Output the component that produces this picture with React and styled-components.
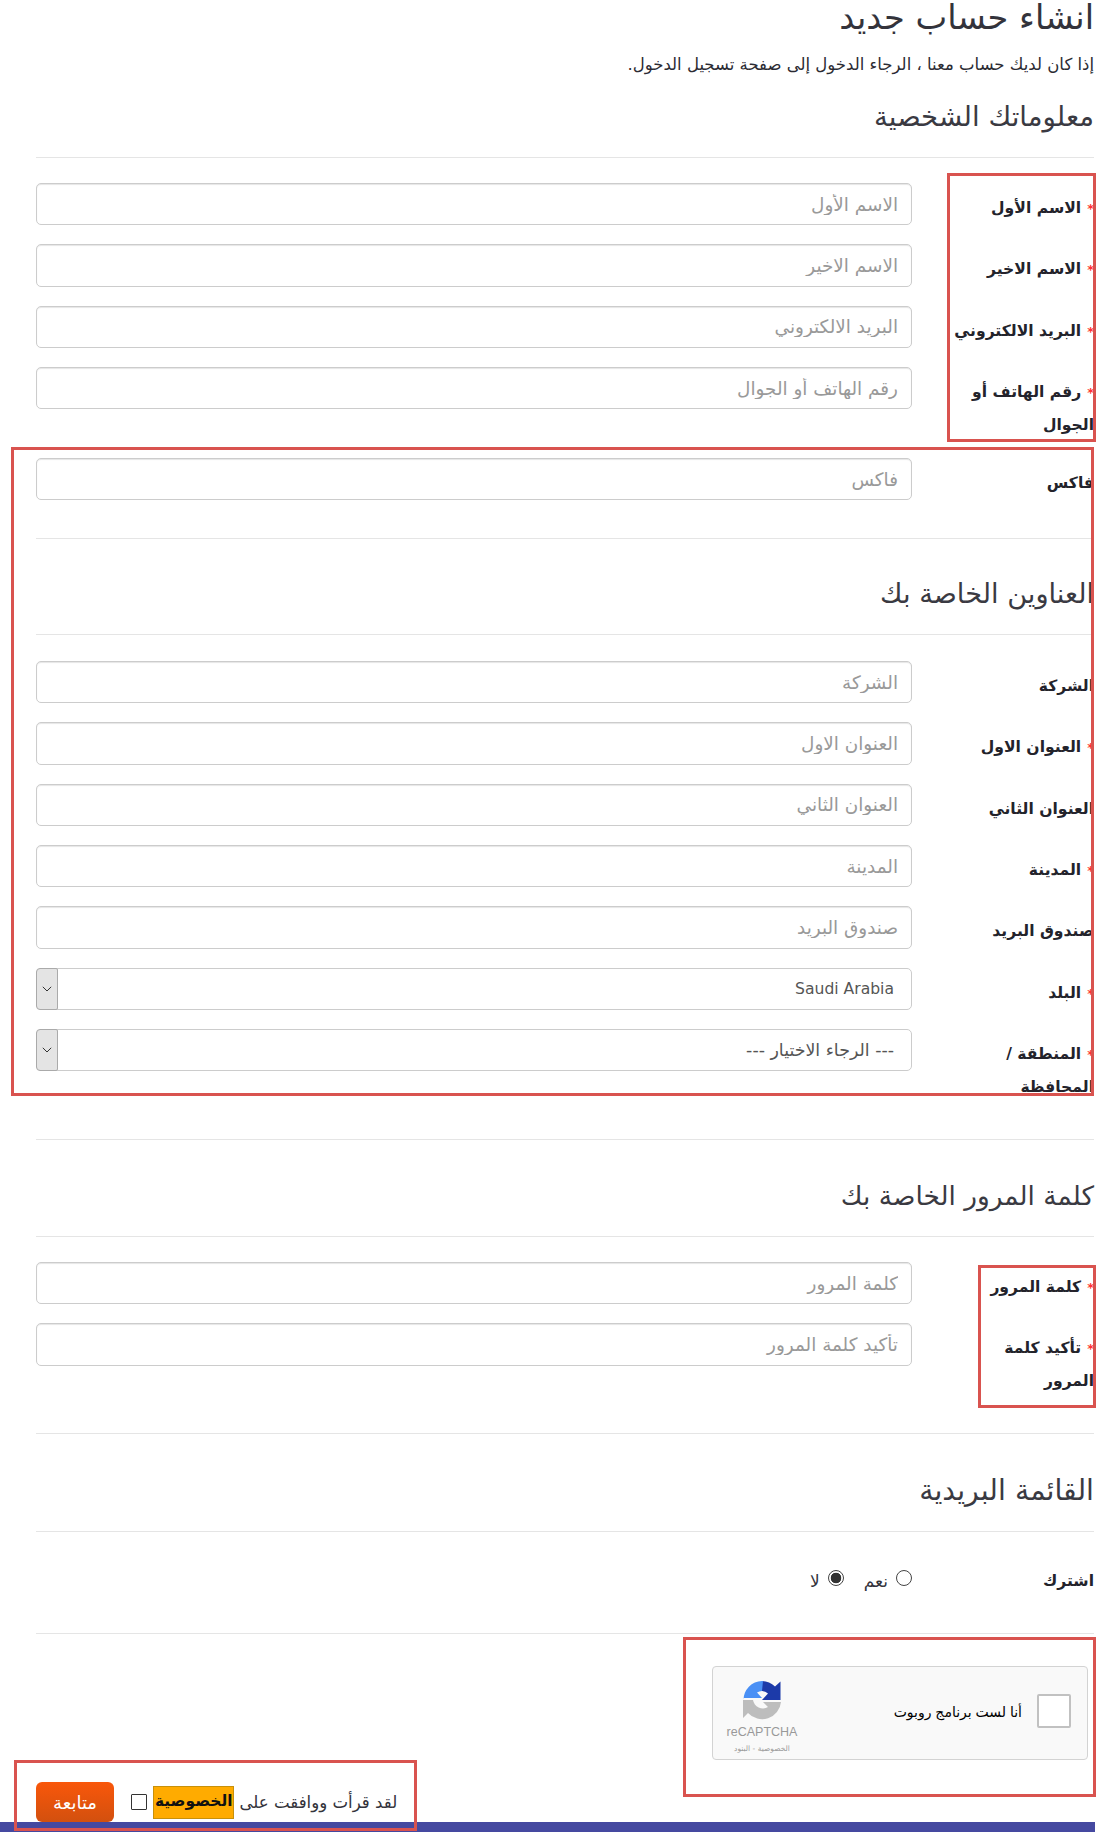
import React from "react";
import styled, { createGlobalStyle } from "styled-components";

const Global = createGlobalStyle`
  html, body { margin: 0; padding: 0; background: #fff; }
  body { font-family: "DejaVu Sans", sans-serif; color: #2b2b33; overflow-x: hidden; }
  * { box-sizing: border-box; }
`;

const Page = styled.div`
  position: relative;
  width: 1096px;
  height: 1832px;
  overflow: hidden;
  background: #fff;
`;
const Main = styled.form`
  padding: 0 2px 0 36px;
  height: 1822px;
`;
const Title = styled.h1`
  margin: 0;
  font-size: 33.7px;
  font-weight: 400;
  line-height: 35px;
  height: 36px;
  color: #33333b;
`;
const Intro = styled.p`
  margin: 15px 0 -1px;
  font-size: 16.5px;
  line-height: 28px;
  color: #2b2b33;
`;
const Legend = styled.h2`
  margin: ${(p) => p.$top}px 0 ${(p) => p.$after}px;
  padding-bottom: 20px;
  font-size: ${(p) => p.$size}px;
  font-weight: 400;
  line-height: 40px;
  color: #3a3a42;
  border-bottom: 1px solid #e5e5e5;
`;
const Row = styled.div`
  display: grid;
  grid-template-columns: 182px 876px;
  margin-bottom: 19px;
  min-height: 42.3px;
`;
const Label = styled.label`
  display: block;
  margin-bottom: -3px;
  padding: 9px 0 0 39px;
  font-size: 15.6px;
  font-weight: 700;
  line-height: 33px;
  color: #23232b;
`;
const Star = styled.span`
  color: #f33;
  font-size: 13px;
  margin-left: 6px;
`;
const Input = styled.input`
  display: block;
  width: 100%;
  height: 42.3px;
  padding: 0 13px;
  font: 400 18.4px "DejaVu Sans", sans-serif;
  color: #444;
  background: #fff;
  border: 1px solid #ccc;
  border-radius: 5px;
  box-shadow: inset 0 1px 1px rgba(0, 0, 0, 0.1);
  &::placeholder { color: #999; opacity: 1; }
`;
const SelectWrap = styled.div`
  position: relative;
  height: 42.3px;
`;
const Select = styled.select`
  display: block;
  width: 100%;
  height: 100%;
  padding: 0 17px 0 30px;
  font: 400 ${(p) => p.$size}px "DejaVu Sans", sans-serif;
  color: #555;
  background: #fff;
  border: 1px solid #ccc;
  border-radius: 5px;
  appearance: none;
`;
const SelectArrow = styled.span`
  position: absolute;
  left: 0;
  top: 0;
  bottom: 0;
  width: 22px;
  display: flex;
  align-items: center;
  justify-content: center;
  background: #e4e4e4;
  border: 1px solid #aaa;
  border-radius: 4px 2px 2px 4px;
  pointer-events: none;
`;
const Divider = styled.hr`
  margin: 38px 0 0;
  border: 0;
  border-top: 1px solid #e5e5e5;
`;
const RadioRow = styled.div`
  display: grid;
  grid-template-columns: 182px 876px;
  height: 39px;
`;
const Radios = styled.div`
  display: flex;
  gap: 20px;
  padding-top: 10px;
  height: 40px;
`;
const RadioOption = styled.label`
  display: flex;
  align-items: center;
  gap: 8px;
  font-size: 17px;
  color: #33333b;
`;
const RadioDot = styled.input`
  appearance: none;
  margin: -6px 0 0;
  width: 16px;
  height: 16px;
  border: 1px solid #444;
  border-radius: 50%;
  background: #fff;
  &:checked { background: radial-gradient(circle, #333 0 5px, #fff 5.6px); }
`;
const CaptchaRow = styled.div`
  display: flex;
  margin: 32px 6px 22px 0;
`;
const Captcha = styled.div`
  width: 376px;
  height: 94px;
  display: flex;
  align-items: center;
  padding: 0 16px 0 13px;
  background: #f9f9f9;
  border: 1px solid #d3d3d3;
  border-radius: 4px;
`;
const CaptchaBox = styled.span`
  width: 34px;
  height: 34px;
  margin-bottom: 5px;
  background: #fff;
  border: 2px solid #c1c1c1;
  border-radius: 2px;
  flex: none;
`;
const CaptchaText = styled.span`
  margin: 0 15px 3px 0;
  font: 400 14px "Liberation Sans", "DejaVu Sans", sans-serif;
  color: #000;
  flex: 1;
`;
const CaptchaBrand = styled.div`
  width: 72px;
  padding-top: 8px;
  display: flex;
  flex-direction: column;
  align-items: center;
`;
const CaptchaWord = styled.span`
  direction: ltr;
  font: 400 12.5px/16px "Liberation Sans", sans-serif;
  color: #999;
  margin-top: 4px;
`;
const CaptchaLinks = styled.span`
  font: 400 7.5px/10px "DejaVu Sans", sans-serif;
  color: #999;
  margin-top: 4px;
`;
const Actions = styled.div`
  display: flex;
  justify-content: flex-end;
  align-items: center;
  gap: 17px;
  height: 40px;
`;
const Agreement = styled.label`
  display: flex;
  align-items: center;
  font-size: 16.6px;
  color: #33333b;
`;
const Highlight = styled.b`
  height: 33px;
  line-height: 29px;
  margin: 0 5px 0 6px;
  padding: 0 1px;
  background: #ffab00;
  border: 1px solid #c8900a;
  color: #111;
  font-size: 15.4px;
`;
const Check = styled.input`
  appearance: none;
  margin: 0;
  width: 16px;
  height: 16px;
  background: #fff;
  border: 1px solid #333;
  border-radius: 1px;
`;
const Continue = styled.button`
  width: 78px;
  height: 40px;
  font: 400 18px "DejaVu Sans", sans-serif;
  color: #fff;
  border: 0;
  border-radius: 6px;
  background: linear-gradient(to bottom, #f9570a, #d2500f);
`;
const Footer = styled.div`
  height: 10px;
  margin-right: 1px;
  background: #4549a0;
`;
const Mark = styled.div`
  position: absolute;
  top: ${(p) => p.$y}px;
  left: ${(p) => p.$x}px;
  width: ${(p) => p.$w}px;
  height: ${(p) => p.$h}px;
  border: 3px solid #d9534f;
  pointer-events: none;
`;

const Field = ({ label, required, ph }) => (
  <Row>
    <Label>
      {required && <Star>*</Star>}
      {label}
    </Label>
    <Input placeholder={ph} readOnly />
  </Row>
);

const Choice = ({ label, required, value, size }) => (
  <Row>
    <Label>
      {required && <Star>*</Star>}
      {label}
    </Label>
    <SelectWrap>
      <Select defaultValue={value} $size={size}>
        <option>{value}</option>
      </Select>
      <SelectArrow>
        <svg width="10" height="6" viewBox="0 0 10 6" fill="none" stroke="#333" strokeWidth="1">
          <path d="M0.8 0.8 L5 5 L9.2 0.8" />
        </svg>
      </SelectArrow>
    </SelectWrap>
  </Row>
);

const RecaptchaLogo = () => (
  <svg width="40" height="40" viewBox="0 0 40 40">
    <path d="M20 1 A19 19 0 0 1 33 6.5 L38.5 1.5 V20 H20 L26 13.5 A10 10 0 0 0 20 11 Z" fill="#1c3aa9" />
    <path d="M1.5 20 A19 19 0 0 1 20 1 L21 1 L20 11 A10 10 0 0 0 15 12.5 L20 18 H1.5 Z" fill="#4a90f5" />
    <path d="M1 20 H11 A10 10 0 0 0 26 27 L21 22 H39 A19 19 0 0 1 6 33 L1 38 Z" fill="#bdbdbd" />
  </svg>
);

export default function App() {
  return (
    <Page dir="rtl">
      <Global />
      <Main onSubmit={(e) => e.preventDefault()}>
        <Title>انشاء حساب جديد</Title>
        <Intro>إذا كان لديك حساب معنا ، الرجاء الدخول إلى صفحة تسجيل الدخول.</Intro>
        <Legend $top={19} $after={25} $size={27.6}>معلوماتك الشخصية</Legend>
        <Field required label="الاسم الأول" ph="الاسم الأول" />
        <Field required label="الاسم الاخير" ph="الاسم الاخير" />
        <Field required label="البريد الالكتروني" ph="البريد الالكتروني" />
        <Field required label="رقم الهاتف أو الجوال" ph="رقم الهاتف أو الجوال" />
        <Field label="فاكس" ph="فاكس" />
        <Divider />
        <Legend $top={35} $after={26} $size={27.2}>العناوين الخاصة بك</Legend>
        <Field label="الشركة" ph="الشركة" />
        <Field required label="العنوان الاول" ph="العنوان الاول" />
        <Field label="العنوان الثاني" ph="العنوان الثاني" />
        <Field required label="المدينة" ph="المدينة" />
        <Field label="صندوق البريد" ph="صندوق البريد" />
        <Choice required label="البلد" value="Saudi Arabia" size={15.6} />
        <Choice required label="المنطقة / المحافظة" value="--- الرجاء الاختيار ---" size={17.4} />
        <Divider />
        <Legend $top={36} $after={25} $size={26.4}>كلمة المرور الخاصة بك</Legend>
        <Field required label="كلمة المرور" ph="كلمة المرور" />
        <Field required label="تأكيد كلمة المرور" ph="تأكيد كلمة المرور" />
        <Divider />
        <Legend $top={37} $after={24} $size={28.4}>القائمة البريدية</Legend>
        <RadioRow>
          <Label>اشترك</Label>
          <Radios>
            <RadioOption>
              <RadioDot type="radio" name="news" />
              نعم
            </RadioOption>
            <RadioOption>
              <RadioDot type="radio" name="news" defaultChecked />
              لا
            </RadioOption>
          </Radios>
        </RadioRow>
        <Divider />
        <CaptchaRow>
          <Captcha>
            <CaptchaBox />
            <CaptchaText>أنا لست برنامج روبوت</CaptchaText>
            <CaptchaBrand>
              <RecaptchaLogo />
              <CaptchaWord>reCAPTCHA</CaptchaWord>
              <CaptchaLinks>الخصوصية - البنود</CaptchaLinks>
            </CaptchaBrand>
          </Captcha>
        </CaptchaRow>
        <Actions>
          <Agreement>
            لقد قرأت ووافقت على
            <Highlight>الخصوصية</Highlight>
            <Check type="checkbox" />
          </Agreement>
          <Continue type="submit">متابعة</Continue>
        </Actions>
      </Main>
      <Footer />
      <Mark $x={947} $y={173} $w={149} $h={269} />
      <Mark $x={11} $y={447} $w={1083} $h={649} />
      <Mark $x={978} $y={1265} $w={118} $h={143} />
      <Mark $x={683} $y={1637} $w={413} $h={160} />
      <Mark $x={14} $y={1760} $w={403} $h={71} />
    </Page>
  );
}
